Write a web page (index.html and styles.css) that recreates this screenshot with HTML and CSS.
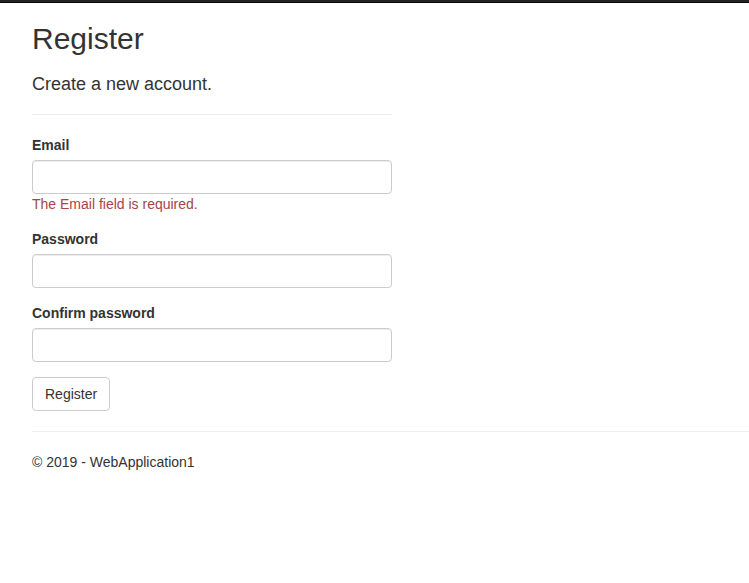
FILE: index.html
```html
<!DOCTYPE html>
<html lang="en">
<head>
<meta charset="utf-8">
<title>Register - WebApplication1</title>
<link rel="stylesheet" href="styles.css">
</head>
<body>
<div class="navbar-edge"></div>
<div class="body-content">
  <h2 class="page-title">Register</h2>
  <form class="register-form">
    <h4 class="subtitle">Create a new account.</h4>
    <hr class="divider">
    <div class="form-group">
      <label class="field-label" for="email">Email</label>
      <input class="form-control" id="email" type="email">
      <span class="text-danger">The Email field is required.</span>
    </div>
    <div class="form-group">
      <label class="field-label" for="password">Password</label>
      <input class="form-control" id="password" type="password">
    </div>
    <div class="form-group">
      <label class="field-label" for="confirm">Confirm password</label>
      <input class="form-control" id="confirm" type="password">
    </div>
    <button type="button" class="btn">Register</button>
  </form>
  <hr class="footer-divider">
  <footer class="footer">
    <p class="footer-text">&copy; 2019 - WebApplication1</p>
  </footer>
</div>
</body>
</html>
```
FILE: styles.css
```css
* { box-sizing: border-box; }
html, body {
  margin: 0;
  padding: 0;
  background: #fff;
}
body {
  font-family: "Liberation Sans", Arial, Helvetica, sans-serif;
  font-size: 14px;
  line-height: 20px;
  color: #333;
  overflow-x: hidden;
}
.navbar-edge {
  height: 3px;
  background: #222;
  border-bottom: 1px solid #080808;
}
.body-content {
  padding-left: 32px;
  display: flow-root;
}
.page-title {
  font-size: 30px;
  font-weight: 500;
  line-height: 33px;
  margin: 19px 0 10px;
}
.register-form {
  width: 360px;
  display: flow-root;
}
.subtitle {
  font-size: 18px;
  font-weight: 500;
  line-height: 19.8px;
  margin: 10px 0 10px;
}
.divider {
  border: 0;
  border-top: 1px solid #eee;
  margin: 19px 0 20px;
  height: 0;
}
.form-group {
  display: flex;
  flex-direction: column;
  align-items: flex-start;
  margin-bottom: 15px;
}
.field-label {
  font-weight: 700;
  margin-bottom: 5px;
}
.form-control {
  width: 100%;
  height: 34px;
  padding: 6px 12px;
  font: inherit;
  color: #555;
  background: #fff;
  border: 1px solid #ccc;
  border-radius: 4px;
  box-shadow: inset 0 1px 1px rgba(0,0,0,.075);
  margin: 0;
}
.text-danger {
  color: #a94442;
}
.btn {
  display: inline-block;
  padding: 6px 12px;
  font: inherit;
  line-height: 20px;
  color: #333;
  background: #fff;
  border: 1px solid #ccc;
  border-radius: 4px;
  margin: 0;
  cursor: pointer;
}
.footer-divider {
  border: 0;
  border-top: 1px solid #eee;
  margin: 20px 0 20px;
  height: 0;
}
.footer-text {
  margin: 0 0 10px;
}
```
